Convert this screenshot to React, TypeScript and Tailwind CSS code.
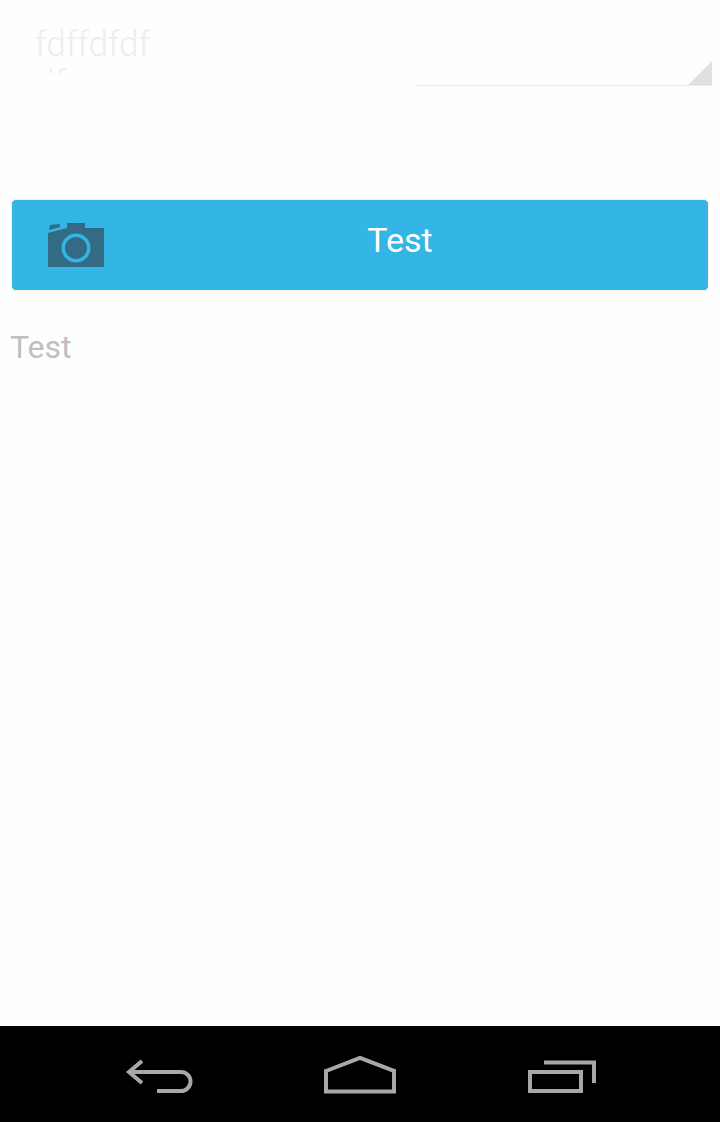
const CameraIcon = () => (
  <svg width="58" height="44" viewBox="0 0 58 44" className="shrink-0">
    <path d="M1 10 L1 44 L57 44 L57 5 L38 5 L38 0 L20 0 L20 5 Z" fill="#336b84" />
    <path d="M3 2 L13 1 L13 4 L2 7 Z" fill="#336b84" />
    <circle cx="29" cy="25" r="12.75" fill="none" stroke="#33b5e5" strokeWidth="3.5" />
  </svg>
);

const BackIcon = () => (
  <svg width="80" height="48" viewBox="0 0 80 48" fill="none" stroke="#a8a8a8" strokeWidth="4">
    <path d="M22 11 L9 22 L22 33" />
    <path d="M9 22 L61 22 A9.5 9.5 0 0 1 61 41 L37 41" />
  </svg>
);

const HomeIcon = () => (
  <svg width="80" height="48" viewBox="0 0 80 48" fill="none" stroke="#a8a8a8" strokeWidth="4">
    <path d="M6 21 L40 8 L74 21 L74 41.5 L6 41.5 Z" />
  </svg>
);

const RecentsIcon = () => (
  <svg width="80" height="48" viewBox="0 0 80 48" fill="none" stroke="#a8a8a8" strokeWidth="4">
    <rect x="10" y="22" width="51" height="19" />
    <path d="M24 12.5 L74 12.5 L74 33" />
  </svg>
);

export default function App() {
  return (
    <div className="flex h-[1122px] w-[720px] flex-col overflow-hidden bg-[#fefefe] font-['Roboto',sans-serif]">
      <main className="flex-1">
        {/* Top row, the second line of the field is cut off as in the screenshot */}
        <div className="flex h-[86px]">
          <div className="h-[73px] w-[416px] shrink-0 overflow-hidden pt-[25px] pl-[35px]">
            <p className="text-[35px] leading-[39px] font-light text-[#ededed]">fdffdfdf</p>
            <p className="text-[35px] leading-[39px] font-light text-[#ededed]">df</p>
          </div>
          <div className="mr-2 flex flex-1 items-end justify-end border-b border-[#ececec]">
            <svg width="24" height="24" viewBox="0 0 24 24">
              <path d="M24 0 L24 24 L0 24 Z" fill="#e0e0e0" />
            </svg>
          </div>
        </div>

        <button className="mx-[11px] mt-[113px] flex h-[92px] w-[698px] items-center rounded-[5px] border border-[#f6f1e0] bg-[#33b5e5] pr-[13px] pl-[35px]">
          <CameraIcon />
          <span className="flex-1 pb-[10px] text-center text-[34px] leading-none text-white">Test</span>
        </button>

        <p className="mt-[38px] pl-[10px] text-[32px] leading-[36px] text-[#bfbfbf]">Test</p>
      </main>

      <nav className="flex h-[96px] items-center justify-center gap-[120px] bg-black">
        <BackIcon />
        <HomeIcon />
        <RecentsIcon />
      </nav>
    </div>
  );
}
